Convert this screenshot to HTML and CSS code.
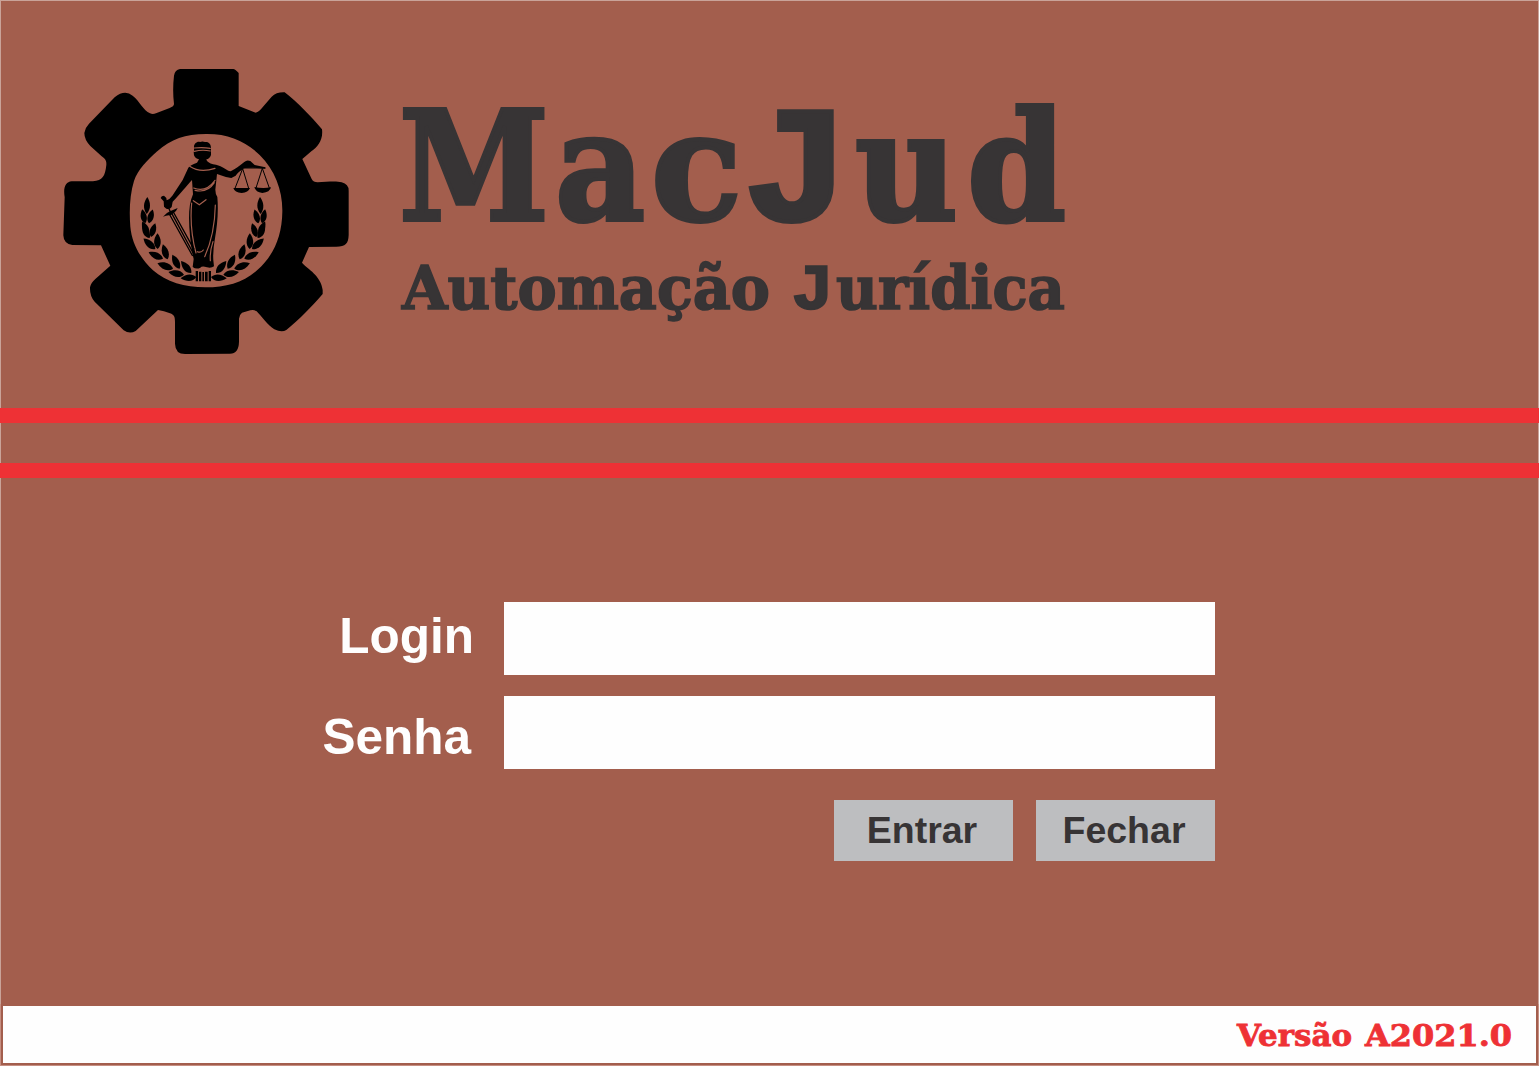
FILE: index.html
```
<!DOCTYPE html>
<html lang="pt-BR">
<head>
<meta charset="utf-8">
<title>MacJud - Automação Jurídica</title>
<link rel="stylesheet" href="styles.css">
</head>
<body>
<div class="window">
  <header class="header">
    <svg class="logo" viewBox="0 0 900 900" aria-hidden="true">
      <defs>
        <path id="leaf" d="M0 0C-13-9-14-26-2-43C10-29 11-11 0 0Z"/>
        <g id="branch">
          <path d="M277 411C265 427 263 446 275 462C289 446 287 427 277 411Z"/>
          <use href="#leaf" transform="translate(271 490) rotate(-10)"/>
          <use href="#leaf" transform="translate(282 490) rotate(18)"/>
          <use href="#leaf" transform="translate(281 523) rotate(-24)"/>
          <use href="#leaf" transform="translate(288 531) rotate(20)"/>
          <use href="#leaf" transform="translate(284 534) rotate(-28)"/>
          <use href="#leaf" transform="translate(301 567) rotate(-46) scale(1.1)"/>
          <use href="#leaf" transform="translate(308 567) rotate(2) scale(1.1)"/>
          <use href="#leaf" transform="translate(324 596) rotate(-63) scale(1.1)"/>
          <use href="#leaf" transform="translate(338 598) rotate(-15) scale(1.1)"/>
          <use href="#leaf" transform="translate(354 626) rotate(-68) scale(1.15)"/>
          <use href="#leaf" transform="translate(374 626) rotate(-25) scale(1.1)"/>
          <use href="#leaf" transform="translate(387 644) rotate(-78) scale(1.1)"/>
          <use href="#leaf" transform="translate(409 639) rotate(-38) scale(1.1)"/>
          <use href="#leaf" transform="translate(424 651) rotate(-92) scale(1.1)"/>
        </g>
      </defs>
      <path fill-rule="evenodd" d="M375 27H535Q540 27 551 39V138L602 158C612 156 618 147 626 138L650 110Q664 96 689 97C729 128 767 168 801 208C805 240 788 260 769 274L742 297L770 357Q775 367 788 367C814 366 842 362 860 367Q881 372 881 392V525C880 551 872 560 844 560L762 561L741 608C758 627 798 647 803 690V702C768 742 735 776 694 810Q680 819 658 808C638 796 621 770 605 754Q597 748 586 751L561 758Q552 765 552 776V845Q551 881 525 881L392 882Q361 883 360 851V786C360 769 357 765 345 760Q327 752 309 750L242 813Q224 823 206 811L119 725Q104 708 105 682Q108 668 121 657L166 617L138 556L52 555Q26 552 25 526L29 412C24 381 32 366 50 364H114C143 361 150 349 154 315C155 299 149 297 140 289L106 258Q88 239 88 219Q91 202 102 191L179 112Q209 88 233 107C255 125 265 151 285 160Q293 164 303 160L344 144Q357 139 357 132Q352 90 357 47Q360 29 375 27ZM453 222C390 223 350 236 305 275C279 299 248 328 237 363C225 402 222 450 226 500C231 552 256 595 294 631C333 666 390 682 451 682C514 682 565 667 607 630C653 590 681 532 682 455C683 391 660 331 614 285C570 242 518 221 453 222Z"/>
      <path d="M417 262C416 251 427 243 435 246Q442 243 450 246C461 244 468 253 468 263Z"/>
      <path d="M416 275Q442 266 468 275V285Q464 297 454 298L456 303Q464 312 483 314C503 318 514 331 527 334C540 328 553 317 564 309C572 302 577 299 586 303L599 315L631 322V326L594 323L569 324Q548 337 542 347L529 354Q509 351 486 342L481 389Q481 401 487 411C491 456 486 500 480 535Q473 572 475 601L477 619Q469 625 456 622Q441 617 436 623Q424 629 413 621L416 597Q408 564 405 528C401 482 399 437 414 403L411 360C397 374 374 405 353 425L350 441Q344 450 334 446L327 440L326 424L317 414Q319 407 327 407L334 414L335 421Q344 418 352 407L383 360L400 323Q405 315 426 308L432 298Q421 296 417 286Z"/>
      <path d="M417 261H468V277H417Z"/>
      <g class="logo-line">
        <path d="M418 264Q443 261 466 265M418 274Q442 268 466 273"/>
        <path d="M404 319Q435 340 480 325M416 384Q452 399 480 361M420 391Q457 400 478 368"/>
        <path d="M415 422L433 434L453 419M410 429Q403 504 423 579M481 435Q479 525 449 590M474 545Q464 574 466 602M427 575Q438 580 445 570"/>
      </g>
      <path d="M324 470Q333 459 345 454L368 444Q364 456 353 461L347 466Q336 464 324 470Z"/>
      <path class="sword" d="M341 444L349 462M343 462L413 588M349 458L416 582M355 456L417 568"/>
      <path class="scales" d="M567 324H631M563 326L540 385M563 326L581 385M622 325L603 384M622 325L643 384"/>
      <path d="M535 384H585Q580 398 560 399Q539 397 535 384ZM598 381Q622 387 648 382Q645 397 622 399Q602 397 598 381Z"/>
      <use href="#branch"/>
      <use href="#branch" transform="translate(892 0) scale(-1 1)"/>
      <path d="M422 633H429V664H422ZM432 635H439V664H432ZM442 636H447V664H442ZM450 635H458V664H450ZM461 633H468V664H461Z"/>
    </svg>
    <svg class="brand" viewBox="0 -30 690 280" role="img" aria-label="MacJud Automação Jurídica">
      <text class="brand-name" y="130"><tspan x="9" textLength="150" lengthAdjust="spacingAndGlyphs">M</tspan><tspan x="165" textLength="90" lengthAdjust="spacingAndGlyphs">a</tspan><tspan x="261" textLength="91" lengthAdjust="spacingAndGlyphs">c</tspan><tspan class="brand-j" x="352" textLength="108" lengthAdjust="spacingAndGlyphs">J</tspan><tspan x="465" textLength="103" lengthAdjust="spacingAndGlyphs">u</tspan><tspan x="577" textLength="99" lengthAdjust="spacingAndGlyphs">d</tspan></text>
      <text class="brand-tagline" y="219"><tspan x="12" textLength="368" lengthAdjust="spacingAndGlyphs">Automação</tspan> <tspan class="tag-j" x="401" textLength="43" lengthAdjust="spacingAndGlyphs">J</tspan><tspan x="446" textLength="229" lengthAdjust="spacingAndGlyphs">urídica</tspan></text>
    </svg>
  </header>
  <div class="stripes"></div>
  <form class="login">
    <label class="label" for="login">Login</label>
    <input class="field" id="login" type="text">
    <label class="label label-password" for="senha">Senha</label>
    <input class="field" id="senha" type="password">
    <div class="actions">
      <button class="button" type="button">Entrar</button>
      <button class="button" type="button">Fechar</button>
    </div>
  </form>
  <footer class="footer">
    <svg class="version" viewBox="0 0 290 40" role="img" aria-label="Versão A2021.0">
      <text y="30"><tspan x="8" textLength="115" lengthAdjust="spacingAndGlyphs">Versão</tspan> <tspan x="136" textLength="147" lengthAdjust="spacingAndGlyphs">A2021.0</tspan></text>
    </svg>
  </footer>
</div>
</body>
</html>
```
FILE: styles.css
```
* { box-sizing: border-box; }
body { margin: 0; font-family: "Liberation Sans", Arial, sans-serif; }
.window {
  width: 1539px; height: 1066px;
  display: flex; flex-direction: column;
  background: #a35e4d;
  overflow: hidden;
}
.header {
  height: 408px;
  display: flex; align-items: flex-start; gap: 35px;
  padding: 59px 0 0 54px;
  border: solid #c9a399; border-width: 1px 1px 0;
}
.logo { width: 300px; height: 300px; }
.logo-line { fill: none; stroke: #a35e4d; stroke-width: 3.5; stroke-linecap: round; }
.sword { fill: none; stroke: #000; stroke-width: 4; }
.scales { fill: none; stroke: #000; stroke-width: 3; }
.brand { width: 690px; height: 280px; fill: #373435; stroke: #373435; }
.brand-name { font: bold 152px "DejaVu Serif", serif; stroke-width: 4; }
.brand-j { font: bold 166px "Liberation Mono", monospace; stroke-width: 4; }
.brand-tagline { font: bold 59px "DejaVu Serif", serif; stroke-width: 1.6; }
.tag-j { font: bold 65px "Liberation Mono", monospace; stroke-width: 1.6; }
.stripes {
  height: 70px;
  border: solid #ee3135; border-width: 15px 0;
  box-shadow: inset 1px 0 #c9a399, inset -1px 0 #c9a399;
}
.login {
  height: 526px;
  display: grid;
  grid-template-columns: 471px 711px;
  grid-template-rows: 73px 73px 71px;
  column-gap: 32px; row-gap: 21px;
  align-content: start;
  padding-top: 124px;
  border: solid #c9a399; border-width: 0 1px;
}
.label {
  justify-self: end;
  padding-top: 4px;
  color: #fefefe;
  font-size: 49.5px; font-weight: bold; line-height: 60px;
  margin-right: -2px;
}
.label-password { padding-top: 11px; margin-right: 1px; }
.field {
  width: 711px; height: 73px; margin: 0; padding: 0 16px;
  border: 0; border-radius: 0; background: #fefefe;
  font: 40px "Liberation Sans", Arial, sans-serif;
}
.actions { grid-column: 2; display: flex; justify-content: flex-end; gap: 23px; padding-top: 10px; }
.button {
  width: 179px; height: 61px; padding: 0 3px 0 0;
  border: 0; background: #bdbec0; color: #373435;
  font: bold 37.5px "Liberation Sans", Arial, sans-serif;
}
.footer {
  height: 62px;
  display: flex; justify-content: flex-end;
  border: solid #c68f82; border-width: 0 1px 1px;
  background: #fefefe;
  box-shadow: inset 0 0 0 2px #a35e4d;
  padding: 12px 19px 0 0;
}
.version { width: 290px; height: 40px; fill: #ee3135; stroke: #ee3135; stroke-width: .8; font: bold 30px "DejaVu Serif", serif; }
```
